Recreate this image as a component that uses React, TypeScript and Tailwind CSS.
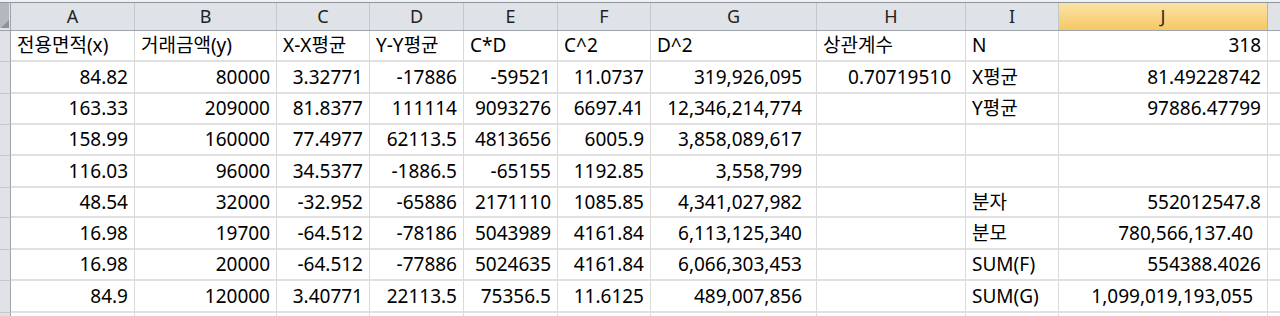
const cols = [
  { key: 'A', w: 'w-[124px]' },
  { key: 'B', w: 'w-[142px]' },
  { key: 'C', w: 'w-[93px]' },
  { key: 'D', w: 'w-[94px]' },
  { key: 'E', w: 'w-[94px]' },
  { key: 'F', w: 'w-[93px]' },
  { key: 'G', w: 'w-[166px]' },
  { key: 'H', w: 'w-[149px]' },
  { key: 'I', w: 'w-[93px]' },
  { key: 'J', w: 'w-[209px]' },
];

// cell: [text, align] where align l = left, r = right, p = right with accounting padding
type Cell = [string, 'l' | 'r' | 'p'];

const rows: { h: string; cells: Cell[] }[] = [
  {
    h: 'h-[31px]',
    cells: [
      ['전용면적(x)', 'l'], ['거래금액(y)', 'l'], ['X-X평균', 'l'], ['Y-Y평균', 'l'], ['C*D', 'l'],
      ['C^2', 'l'], ['D^2', 'l'], ['상관계수', 'l'], ['N', 'l'], ['318', 'r'],
    ],
  },
  {
    h: 'h-[32px]',
    cells: [
      ['84.82', 'r'], ['80000', 'r'], ['3.32771', 'r'], ['-17886', 'r'], ['-59521', 'r'],
      ['11.0737', 'r'], ['319,926,095', 'p'], ['0.70719510', 'p'], ['X평균', 'l'], ['81.49228742', 'r'],
    ],
  },
  {
    h: 'h-[31px]',
    cells: [
      ['163.33', 'r'], ['209000', 'r'], ['81.8377', 'r'], ['111114', 'r'], ['9093276', 'r'],
      ['6697.41', 'r'], ['12,346,214,774', 'p'], ['', 'l'], ['Y평균', 'l'], ['97886.47799', 'r'],
    ],
  },
  {
    h: 'h-[31px]',
    cells: [
      ['158.99', 'r'], ['160000', 'r'], ['77.4977', 'r'], ['62113.5', 'r'], ['4813656', 'r'],
      ['6005.9', 'r'], ['3,858,089,617', 'p'], ['', 'l'], ['', 'l'], ['', 'r'],
    ],
  },
  {
    h: 'h-[32px]',
    cells: [
      ['116.03', 'r'], ['96000', 'r'], ['34.5377', 'r'], ['-1886.5', 'r'], ['-65155', 'r'],
      ['1192.85', 'r'], ['3,558,799', 'p'], ['', 'l'], ['', 'l'], ['', 'r'],
    ],
  },
  {
    h: 'h-[30px]',
    cells: [
      ['48.54', 'r'], ['32000', 'r'], ['-32.952', 'r'], ['-65886', 'r'], ['2171110', 'r'],
      ['1085.85', 'r'], ['4,341,027,982', 'p'], ['', 'l'], ['분자', 'l'], ['552012547.8', 'r'],
    ],
  },
  {
    h: 'h-[32px]',
    cells: [
      ['16.98', 'r'], ['19700', 'r'], ['-64.512', 'r'], ['-78186', 'r'], ['5043989', 'r'],
      ['4161.84', 'r'], ['6,113,125,340', 'p'], ['', 'l'], ['분모', 'l'], ['780,566,137.40', 'p'],
    ],
  },
  {
    h: 'h-[31px]',
    cells: [
      ['16.98', 'r'], ['20000', 'r'], ['-64.512', 'r'], ['-77886', 'r'], ['5024635', 'r'],
      ['4161.84', 'r'], ['6,066,303,453', 'p'], ['', 'l'], ['SUM(F)', 'l'], ['554388.4026', 'r'],
    ],
  },
  {
    h: 'h-[32px]',
    cells: [
      ['84.9', 'r'], ['120000', 'r'], ['3.40771', 'r'], ['22113.5', 'r'], ['75356.5', 'r'],
      ['11.6125', 'r'], ['489,007,856', 'p'], ['', 'l'], ['SUM(G)', 'l'], ['1,099,019,193,055', 'p'],
    ],
  },
  {
    h: 'h-[32px]',
    cells: [
      ['', 'l'], ['', 'l'], ['', 'l'], ['', 'l'], ['', 'l'],
      ['', 'l'], ['', 'l'], ['', 'l'], ['', 'l'], ['', 'l'],
    ],
  },
];

const alignCls = {
  l: 'justify-start pl-[6px]',
  r: 'justify-end pr-[6px]',
  p: 'justify-end pr-[14px]',
};

function HeaderRow() {
  return (
    <div className="flex h-[28px] border-b border-[#9ea4ab] bg-[#dfe3e8]">
      <div className="w-[11px] shrink-0 border-r border-[#9ea4ab] flex items-start">
        <div className="w-[9px] h-[25px] bg-[#b4b8bd] relative">
          <svg className="absolute right-0 bottom-0" width="8" height="8" viewBox="0 0 8 8">
            <polygon points="8,0 8,8 0,8" fill="#8e9297" />
          </svg>
        </div>
      </div>
      {cols.map((c) => (
        <div
          key={c.key}
          className={`${c.w} shrink-0 flex items-center justify-center text-[18px] ${
            c.key === 'J'
              ? 'bg-gradient-to-b from-[#fbe3a4] to-[#f6c863] border-r border-[#e3b04c] text-[#2a2a2a]'
              : 'border-r border-[#c4c8cd] text-[#222]'
          }`}
        >
          {c.key}
        </div>
      ))}
      <div className="flex-1" />
    </div>
  );
}

export default function App() {
  return (
    <div
      className="w-[1280px] h-[316px] overflow-hidden bg-white text-black"
      style={{ fontFamily: '"Noto Sans", "Noto Sans CJK KR", sans-serif' }}
    >
      <div className="h-[2px] bg-[#eef0f2]" />
      <div className="h-[1px] bg-[#8f959c]" />
      <HeaderRow />
      {rows.map((r, i) => (
        <div key={i} className={`flex ${r.h}`}>
          <div className="w-[11px] shrink-0 bg-[#dfe3e8] border-r border-[#9ea4ab] border-b border-b-[#c4c8cd]" />
          {r.cells.map((cell, j) => (
            <div
              key={j}
              className={`${cols[j].w} shrink-0 flex items-center whitespace-nowrap text-[19px] border-r border-[#d9d9d9] border-b-2 border-b-[#e0e0e0] ${alignCls[cell[1]]}`}
            >
              {cell[0]}
            </div>
          ))}
          <div className="flex-1 border-b-2 border-b-[#e0e0e0]" />
        </div>
      ))}
    </div>
  );
}
